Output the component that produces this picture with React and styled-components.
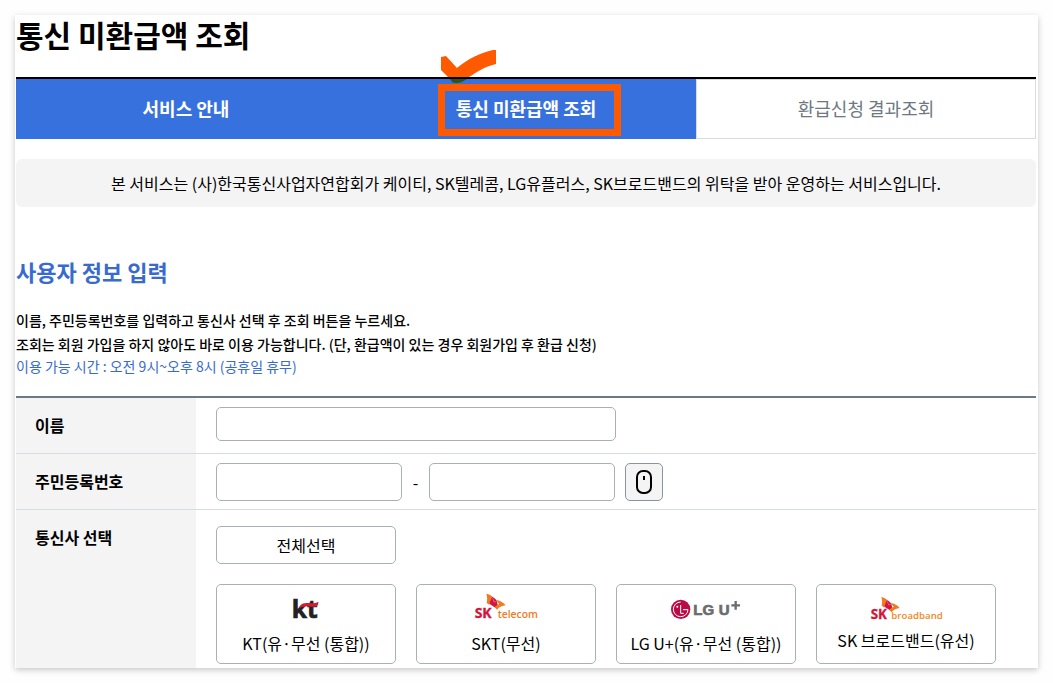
import React from 'react'
import styled, { createGlobalStyle } from 'styled-components'

const GlobalStyle = createGlobalStyle`
    * {
        box-sizing: border-box;
    }

    body {
        margin: 0;
        background-color: #fefefe;
        color: #000;
        font-family: "Noto Sans CJK KR", "Noto Sans", sans-serif;
        font-size: 16px;
        line-height: 24px;
    }

    button, input {
        font: inherit;
        color: inherit;
    }
`;

const Page = styled.main`
    margin: 15px;
    padding: 0 2px 4px 1px;
    background-color: #fff;
    box-shadow: 0 2px 6px rgba(0, 0, 0, 0.22);
`;

const Title = styled.h1`
    margin: 0;
    padding-bottom: 24px;
    font-size: 30px;
    font-weight: 700;
    line-height: 38px;
`;

const Tabs = styled.nav`
    display: grid;
    grid-template-columns: repeat(3, 1fr);
    border-top: 2px solid #000;
`;

const Tab = styled.a`
    display: flex;
    align-items: center;
    justify-content: center;
    height: 60px;
    padding-bottom: 2px;
    border: 1px solid ${({ $filled }) => ($filled ? '#3771de' : '#d8dce0')};
    background-color: ${({ $filled }) => ($filled ? '#3771de' : '#fff')};
    color: ${({ $filled }) => ($filled ? '#fff' : '#6d7882')};
    font-size: 18px;
    font-weight: ${({ $filled }) => ($filled ? 700 : 400)};
    line-height: 28px;
    text-decoration: none;
`;

const Marked = styled.span`
    position: relative;

    &::after {
        content: "";
        position: absolute;
        inset: -10px -25px -14px -18px;
        border: 7px solid #ff5a00;
    }
`;

const CheckMark = styled.svg`
    position: absolute;
    left: -15px;
    top: -44px;
    width: 56px;
    height: 34px;
`;

const Notice = styled.p`
    margin: 20px 0 48px;
    padding: 12px 20px;
    border-radius: 6px;
    background-color: #f4f4f4;
    text-align: center;
`;

const SectionTitle = styled.h2`
    margin: 0 0 21px;
    color: #386bcd;
    font-size: 22px;
    font-weight: 700;
    line-height: 32px;
`;

const Guide = styled.p`
    margin: 0;
    font-size: 14px;
    font-weight: 500;
`;

const Hours = styled(Guide)`
    margin-bottom: 20px;
    color: #386bcd;
    font-weight: 400;
    line-height: 20px;
`;

const Form = styled.form`
    border-top: 2px solid #6d7882;
`;

const Row = styled.div`
    display: grid;
    grid-template-columns: 180px 1fr;
    border-bottom: 1px solid #d8dce0;

    &:last-child {
        border-bottom: 0;
        margin-bottom: -4px;
    }
`;

const RowLabel = styled.label`
    padding: 15px 19px 16px;
    background-color: #f4f4f4;
    font-weight: 700;
`;

const Field = styled.div`
    display: flex;
    flex-wrap: wrap;
    align-items: center;
    gap: 10px;
    padding: 9px 20px 8px;
`;

const NameField = styled(Field)`
    padding-bottom: 12px;
`;

const CarrierField = styled.div`
    display: flex;
    flex-direction: column;
    align-items: flex-start;
    gap: 20px;
    padding: 16px 20px 4px;
`;

const Input = styled.input`
    width: ${({ $wide }) => ($wide ? '400px' : '186px')};
    height: ${({ $wide }) => ($wide ? '34px' : '38px')};
    padding: 0 12px;
    border: 1px solid #a9afb7;
    border-radius: 5px;
    background-color: #fff;
`;

const Dash = styled.span`
    width: 7px;
    text-align: center;
`;

const KeypadButton = styled.button`
    display: flex;
    align-items: center;
    justify-content: center;
    width: 38px;
    height: 38px;
    padding: 0;
    border: 1px solid #8a949e;
    border-radius: 5px;
    background-color: #f4f4f4;
`;

const SelectAll = styled.button`
    width: 180px;
    height: 38px;
    padding: 0;
    border: 1px solid #a9afb7;
    border-radius: 5px;
    background-color: #fff;
`;

const Carriers = styled.div`
    display: flex;
    flex-wrap: wrap;
    gap: 20px;
`;

const Carrier = styled.button`
    display: flex;
    flex-direction: column;
    align-items: center;
    justify-content: center;
    width: 180px;
    height: 80px;
    padding: 0;
    border: 1px solid #a9afb7;
    border-radius: 5px;
    background-color: #fff;
    white-space: nowrap;
`;

const Logo = styled.svg`
    display: block;
    width: 120px;
    height: ${({ $short }) => ($short ? '32px' : '38px')};
    font-family: "Open Sans", "Noto Sans", sans-serif;
    font-weight: 700;
`;

const KtLogo = () => (
    <Logo viewBox="0 0 360 114" aria-hidden="true">
        <text x="137" y="74" fontSize="74" fill="#222" stroke="#222" strokeWidth="2">kt</text>
        <path d="M158 46C164 31 182 29 194 31C204 32 210 29 217 26C218 38 210 42 197 41C182 38 170 39 158 46Z" fill="#d91a2f" />
    </Logo>
)

const Wings = () => (
    <>
        <path d="M0 0C8 1 15 5 20 11C14 17 10 24 9 33L1 28C3 19 3 9 0 0Z" fill="#f07a22" />
        <path d="M18 10C25 13 30 18 32 23L35 39L27 42L9 30C11 22 14 16 18 10Z" fill="#d3143c" />
        <path d="M29 19C40 20 51 26 58 35C48 36 39 40 32 48L25 40C29 36 34 33 39 31Z" fill="#f07a22" />
        <path d="M19 14L23 25L31 24" fill="none" stroke="#fff" strokeWidth="1" />
    </>
)

const SkTelecomLogo = () => (
    <Logo viewBox="0 0 360 114" aria-hidden="true">
        <g transform="translate(121 2)">
            <Wings />
        </g>
        <text x="86" y="75" fontSize="42" fill="#d3143c" stroke="#d3143c">SK</text>
        <text x="155" y="75" fontSize="31" fontWeight="600" fill="#f07a22">telecom</text>
    </Logo>
)

const LgLogo = () => (
    <Logo viewBox="0 0 360 114" aria-hidden="true">
        <circle cx="104" cy="49" r="29" fill="#b90b46" />
        <path d="M104 27A22 22 0 1 0 126 50H111M104 36V61H113" fill="none" stroke="#fff" strokeWidth="3" />
        <circle cx="94" cy="41" r="3" fill="#fff" />
        <g fontFamily="Liberation Sans" fontSize="45" fill="#6b6c6e" stroke="#6b6c6e" strokeWidth="2">
            <text x="142" y="67">LG</text>
            <text x="218" y="67">U</text>
        </g>
        <path d="M269 24V50M256 37H282" fill="none" stroke="#6b6c6e" strokeWidth="7" />
    </Logo>
)

const SkBroadbandLogo = () => (
    <Logo viewBox="0 0 360 96" $short aria-hidden="true">
        <g transform="translate(106 3) scale(0.95)">
            <Wings />
        </g>
        <text x="74" y="70" fontSize="40" fill="#d3143c" stroke="#d3143c">SK</text>
        <text x="136" y="70" fontSize="29" fontWeight="600" fill="#ee8a1d">broadband</text>
    </Logo>
)

const carriers = [
    { name: 'KT(유·무선 (통합))', logo: KtLogo },
    { name: 'SKT(무선)', logo: SkTelecomLogo },
    { name: 'LG U+(유·무선 (통합))', logo: LgLogo },
    { name: 'SK 브로드밴드(유선)', logo: SkBroadbandLogo },
]

const App = () => {
    return (
        <>
            <GlobalStyle />
            <Page>
                <Title>통신 미환급액 조회</Title>

                <Tabs>
                    <Tab href="#guide" $filled>서비스 안내</Tab>
                    <Tab href="#search" $filled>
                        <Marked>
                            통신 미환급액 조회
                            <CheckMark viewBox="0 0 56 34" aria-hidden="true">
                                <path d="M0 7L5 6L16 18C28 8 39 3 52 0H55V14C43 17 36 22 28 27H7L0 20Z" fill="#ff5a00" />
                                <path d="M9 29H26C21 32 19 33 15 33C12 33 11 32 9 29Z" fill="#34540c" />
                            </CheckMark>
                        </Marked>
                    </Tab>
                    <Tab href="#result">환급신청 결과조회</Tab>
                </Tabs>

                <Notice>
                    본 서비스는 (사)한국통신사업자연합회가 케이티, SK텔레콤, LG유플러스, SK브로드밴드의 위탁을 받아 운영하는 서비스입니다.
                </Notice>

                <SectionTitle>사용자 정보 입력</SectionTitle>
                <Guide>이름, 주민등록번호를 입력하고 통신사 선택 후 조회 버튼을 누르세요.</Guide>
                <Guide>조회는 회원 가입을 하지 않아도 바로 이용 가능합니다. (단, 환급액이 있는 경우 회원가입 후 환급 신청)</Guide>
                <Hours>이용 가능 시간 : 오전 9시~오후 8시 (공휴일 휴무)</Hours>

                <Form>
                    <Row>
                        <RowLabel htmlFor="name">이름</RowLabel>
                        <NameField>
                            <Input id="name" type="text" $wide />
                        </NameField>
                    </Row>
                    <Row>
                        <RowLabel htmlFor="rrn-front">주민등록번호</RowLabel>
                        <Field>
                            <Input id="rrn-front" type="text" maxLength={6} />
                            <Dash>-</Dash>
                            <Input type="password" maxLength={7} aria-label="주민등록번호 뒷자리" />
                            <KeypadButton type="button" aria-label="마우스 입력기">
                                <svg width="18" height="26" viewBox="0 0 18 26" fill="none" stroke="#000" strokeWidth="2">
                                    <rect x="2" y="2" width="14" height="22" rx="6" />
                                    <path d="M9 7V11" />
                                </svg>
                            </KeypadButton>
                        </Field>
                    </Row>
                    <Row>
                        <RowLabel as="div" id="carrier-label">통신사 선택</RowLabel>
                        <CarrierField role="group" aria-labelledby="carrier-label">
                            <SelectAll type="button">전체선택</SelectAll>
                            <Carriers>
                                {carriers.map(({ name, logo: CarrierLogo }) => (
                                    <Carrier type="button" key={name}>
                                        <CarrierLogo />
                                        {name}
                                    </Carrier>
                                ))}
                            </Carriers>
                        </CarrierField>
                    </Row>
                </Form>
            </Page>
        </>
    )
}

export default App
